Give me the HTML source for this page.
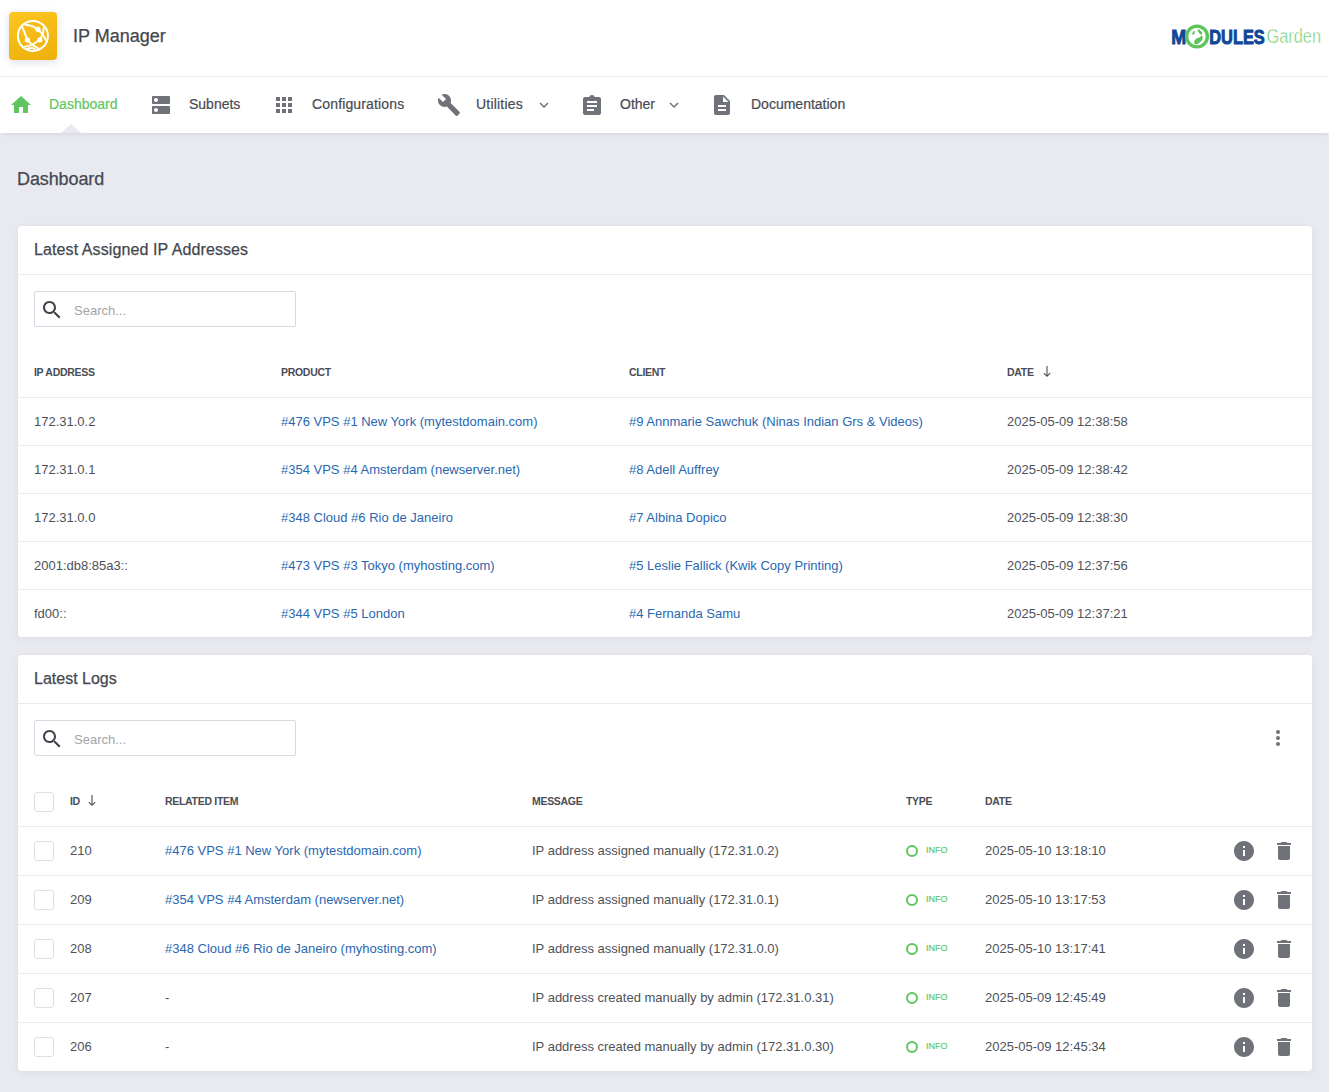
<!DOCTYPE html>
<html><head><meta charset="utf-8">
<style>
*{box-sizing:border-box;margin:0;padding:0}
html,body{width:1329px;height:1092px;overflow:hidden}
body{position:relative;background:#e9eaef;font-family:"Liberation Sans",sans-serif;color:#474a52}
.abs{position:absolute;white-space:nowrap;line-height:1}
#hdr{position:absolute;left:0;top:0;width:1329px;height:77px;background:#fff;border-bottom:1px solid #eceef2}
#nav{position:absolute;left:0;top:77px;width:1329px;height:56px;background:#fff;box-shadow:0 3px 4px -2px rgba(40,45,70,.12)}
.logo{position:absolute;left:9px;top:12px;width:48px;height:48px;border-radius:4px;background:linear-gradient(160deg,#fec623 0%,#f2b812 60%,#eeb00b 100%);box-shadow:0 2px 8px rgba(60,70,110,.18)}
.nt{font-size:14px;color:#474a52;-webkit-text-stroke:0.2px}
.ico{position:absolute;fill:#6f7279}
.card{position:absolute;left:18px;width:1294px;background:#fff;border-radius:3px;box-shadow:0 0 1px rgba(40,45,70,.10),0 2px 8px rgba(40,45,70,.06)}
.ct{font-size:16px;color:#44474f;-webkit-text-stroke:0.25px}
.hline{position:absolute;left:0;width:1294px;height:1px;background:#e8eaef}
.search{position:absolute;left:16px;width:262px;height:36px;border:1px solid #d6d9e1;border-radius:2px;background:#fff}
.ph{font-size:13px;color:#a2a5ab}
.th{font-size:10.5px;font-weight:bold;color:#4a4d55;letter-spacing:-0.3px}
.td{font-size:13px;color:#4e5158}
.lk{font-size:13px;color:#2a67b1}
.cb{position:absolute;width:20px;height:20px;border:1px solid #dcdfe6;border-radius:3px;background:#fff}
.ring{position:absolute;width:12px;height:12px;border:2px solid #5ec65f;border-radius:50%}
.info{font-size:9px;color:#5ec65f;letter-spacing:0px;-webkit-text-stroke:0.15px}
</style></head>
<body>
<div id="hdr">
  <div class="logo">
    <svg width="48" height="48" viewBox="0 0 48 48" style="position:absolute;left:0;top:0">
      <g transform="translate(23.9,23.9)" fill="none" stroke="#fff" stroke-width="1.9" stroke-linecap="round" stroke-linejoin="round">
        <circle cx="0" cy="0" r="15" stroke-width="2"/>
        <path d="M-7.5,-11.2 Q-0.5,-10.8 5.1,-6.4"/>
        <path d="M-10.3,-8.3 L-5.5,3.9"/>
        <path d="M5.1,-6.4 L9.8,-1.5 L7,3.9"/>
        <path d="M9.8,-1.5 L11,-8.5"/>
        <path d="M9.8,-1.5 L13.5,4.8"/>
        <path d="M-5.5,3.9 L-0.8,9 L7,3.9"/>
        <path d="M-8.5,11 L-0.8,9 L5.5,12.5"/>
        <path d="M-5,12.8 Q-1,10.8 2.5,13.6"/>
        <circle cx="5.1" cy="-6.4" r="1.7" fill="#fff"/>
        <circle cx="-5.5" cy="3.9" r="1.7" fill="#fff"/>
        <circle cx="7" cy="3.9" r="1.7" fill="#fff"/>
      </g>
    </svg>
  </div>
  <div class="abs" style="left:73px;top:26.8px;font-size:18px;color:#44474f;-webkit-text-stroke:0.25px">IP Manager</div>
  <svg width="160" height="30" viewBox="0 0 160 30" style="position:absolute;left:1166px;top:22px">
    <text x="5.2" y="21.5" font-family="Liberation Sans" font-weight="bold" font-size="19.5" fill="#0f4797" stroke="#0f4797" stroke-width="0.9" textLength="15" lengthAdjust="spacingAndGlyphs">M</text>
    <circle cx="31" cy="14.5" r="10.4" fill="#fff" stroke="#5cc45a" stroke-width="3.4"/>
    <path d="M25.5,12.5 l2.5,-4 l1,1.5 l-1,2.5z M31.5,7.2 l2.5,0.8 l2.5,3 l-1,2 l-2,-1.5 l-1.5,-2z M28,21.5 l0.5,-3 l2,-2 l3,-1 l2,-2 l1.3,1.5 l-0.5,3 l-2.5,2.5 l-3,2z" fill="#5cc45a"/>
    <text x="43.3" y="21.5" font-family="Liberation Sans" font-weight="bold" font-size="19.5" fill="#0f4797" stroke="#0f4797" stroke-width="0.9" textLength="55.5" lengthAdjust="spacingAndGlyphs">DULES</text>
    <text x="100.5" y="21.2" font-family="Liberation Sans" font-size="19.5" fill="#6fcc6c" stroke="#fff" stroke-width="0.45" textLength="54.5" lengthAdjust="spacingAndGlyphs">Garden</text>
  </svg>
</div>

<div id="nav">
  <svg class="ico" width="24" height="24" viewBox="0 0 24 24" style="left:9px;top:16px;fill:#5fc65f"><path d="M10 20v-6h4v6h5v-8h3L12 3 2 12h3v8z"/></svg>
  <div class="abs nt" style="left:49px;top:20.2px;color:#5fc65f">Dashboard</div>
  <svg class="ico" width="24" height="24" viewBox="0 0 24 24" style="left:149px;top:16px"><path d="M20 13H4c-.55 0-1 .45-1 1v6c0 .55.45 1 1 1h16c.55 0 1-.45 1-1v-6c0-.55-.45-1-1-1zM7 19c-1.1 0-2-.9-2-2s.9-2 2-2 2 .9 2 2-.9 2-2 2zM20 3H4c-.55 0-1 .45-1 1v6c0 .55.45 1 1 1h16c.55 0 1-.45 1-1V4c0-.55-.45-1-1-1zM7 9c-1.1 0-2-.9-2-2s.9-2 2-2 2 .9 2 2-.9 2-2 2z"/></svg>
  <div class="abs nt" style="left:189px;top:20.2px">Subnets</div>
  <svg class="ico" width="24" height="24" viewBox="0 0 24 24" style="left:272px;top:16px"><path d="M4 8h4V4H4v4zm6 12h4v-4h-4v4zm-6 0h4v-4H4v4zm0-6h4v-4H4v4zm6 0h4v-4h-4v4zm6-10v4h4V4h-4zm-6 4h4V4h-4v4zm6 6h4v-4h-4v4zm0 6h4v-4h-4v4z"/></svg>
  <div class="abs nt" style="left:312px;top:20.2px;letter-spacing:0.15px">Configurations</div>
  <svg class="ico" width="24" height="24" viewBox="0 0 24 24" style="left:436.5px;top:16px"><path d="M22.7 19l-9.1-9.1c.9-2.3.4-5-1.5-6.9-2-2-5-2.4-7.4-1.3L9 6 6 9 1.6 4.7C.4 7.1.9 10.1 2.9 12.1c1.9 1.9 4.6 2.4 6.9 1.5l9.1 9.1c.4.4 1 .4 1.4 0l2.3-2.3c.5-.4.5-1.1.1-1.4z"/></svg>
  <div class="abs nt" style="left:476px;top:20.2px;letter-spacing:0.2px">Utilities</div>
  <svg class="ico" width="18" height="18" viewBox="0 0 24 24" style="left:535px;top:19px"><path d="M16.59 8.59L12 13.17 7.41 8.59 6 10l6 6 6-6z"/></svg>
  <svg class="ico" width="24" height="24" viewBox="0 0 24 24" style="left:580px;top:17px"><path d="M19 3h-4.18C14.4 1.84 13.3 1 12 1c-1.3 0-2.4.84-2.82 2H5c-1.1 0-2 .9-2 2v14c0 1.1.9 2 2 2h14c1.1 0 2-.9 2-2V5c0-1.1-.9-2-2-2zm-2 14H7v-2h7v2zm3-4H7v-2h10v2zm0-4H7V7h10v2z"/></svg>
  <div class="abs nt" style="left:620px;top:20.2px">Other</div>
  <svg class="ico" width="18" height="18" viewBox="0 0 24 24" style="left:665px;top:19px"><path d="M16.59 8.59L12 13.17 7.41 8.59 6 10l6 6 6-6z"/></svg>
  <svg class="ico" width="24" height="24" viewBox="0 0 24 24" style="left:710px;top:16px"><path d="M14 2H6c-1.1 0-1.99.9-1.99 2L4 20c0 1.1.89 2 1.99 2H18c1.1 0 2-.9 2-2V8l-6-6zm2 16H8v-2h8v2zm0-4H8v-2h8v2zm-3-5V3.5L18.5 9H13z"/></svg>
  <div class="abs nt" style="left:751px;top:20.2px">Documentation</div>
  <svg width="20" height="9" viewBox="0 0 20 9" style="position:absolute;left:61px;top:47px"><path d="M0 9 L10 0 L20 9z" fill="#e9eaef"/></svg>
</div>

<div class="abs" style="left:17px;top:169.8px;font-size:18px;color:#44474f;letter-spacing:-0.1px;-webkit-text-stroke:0.25px">Dashboard</div>

<!-- CARD1 -->
<div class="card" style="top:226px;height:411px">
<div class="abs ct" style="left:16px;top:16.4px;letter-spacing:0.1px">Latest Assigned IP Addresses</div>
<div class="hline" style="top:48px"></div>
<div class="search" style="top:65px"><svg width="24" height="24" viewBox="0 0 24 24" style="position:absolute;left:5px;top:5.6px;fill:#3f4249"><path d="M15.5 14h-.79l-.28-.27C15.41 12.59 16 11.11 16 9.5 16 5.91 13.09 3 9.5 3S3 5.91 3 9.5 5.91 16 9.5 16c1.61 0 3.09-.59 4.23-1.57l.27.28v.79l5 4.99L20.49 19l-4.99-5zm-6 0C7.01 14 5 11.99 5 9.5S7.01 5 9.5 5 14 7.01 14 9.5 11.99 14 9.5 14z"/></svg><div class="abs ph" style="left:39px;top:12px">Search...</div></div>
<div class="abs th" style="left:16px;top:140.6px">IP ADDRESS</div>
<div class="abs th" style="left:263px;top:140.6px">PRODUCT</div>
<div class="abs th" style="left:611px;top:140.6px">CLIENT</div>
<div class="abs th" style="left:989px;top:140.6px">DATE</div>
<svg width="9" height="12" viewBox="0 0 9 12" style="position:absolute;left:1024.5px;top:140px"><path d="M4 0V10.3 M0.8 7.1 L4 10.3 L7.2 7.1" fill="none" stroke="#4a4d55" stroke-width="1.1"/></svg>
<div class="hline" style="top:171px"></div>
<div class="abs td" style="left:16px;top:188.9px">172.31.0.2</div>
<div class="abs lk" style="left:263px;top:188.9px">#476 VPS #1 New York (mytestdomain.com)</div>
<div class="abs lk" style="left:611px;top:188.9px">#9 Annmarie Sawchuk (Ninas Indian Grs &amp; Videos)</div>
<div class="abs td" style="left:989px;top:188.9px">2025-05-09 12:38:58</div>
<div class="hline" style="top:219px"></div>
<div class="abs td" style="left:16px;top:236.9px">172.31.0.1</div>
<div class="abs lk" style="left:263px;top:236.9px">#354 VPS #4 Amsterdam (newserver.net)</div>
<div class="abs lk" style="left:611px;top:236.9px">#8 Adell Auffrey</div>
<div class="abs td" style="left:989px;top:236.9px">2025-05-09 12:38:42</div>
<div class="hline" style="top:267px"></div>
<div class="abs td" style="left:16px;top:284.9px">172.31.0.0</div>
<div class="abs lk" style="left:263px;top:284.9px">#348 Cloud #6 Rio de Janeiro</div>
<div class="abs lk" style="left:611px;top:284.9px">#7 Albina Dopico</div>
<div class="abs td" style="left:989px;top:284.9px">2025-05-09 12:38:30</div>
<div class="hline" style="top:315px"></div>
<div class="abs td" style="left:16px;top:332.9px">2001:db8:85a3::</div>
<div class="abs lk" style="left:263px;top:332.9px">#473 VPS #3 Tokyo (myhosting.com)</div>
<div class="abs lk" style="left:611px;top:332.9px">#5 Leslie Fallick (Kwik Copy Printing)</div>
<div class="abs td" style="left:989px;top:332.9px">2025-05-09 12:37:56</div>
<div class="hline" style="top:363px"></div>
<div class="abs td" style="left:16px;top:380.9px">fd00::</div>
<div class="abs lk" style="left:263px;top:380.9px">#344 VPS #5 London</div>
<div class="abs lk" style="left:611px;top:380.9px">#4 Fernanda Samu</div>
<div class="abs td" style="left:989px;top:380.9px">2025-05-09 12:37:21</div>
</div>

<!-- CARD2 -->
<div class="card" style="top:655px;height:416px">
<div class="abs ct" style="left:16px;top:16.4px">Latest Logs</div>
<div class="hline" style="top:48px"></div>
<div class="search" style="top:65px"><svg width="24" height="24" viewBox="0 0 24 24" style="position:absolute;left:5px;top:5.6px;fill:#3f4249"><path d="M15.5 14h-.79l-.28-.27C15.41 12.59 16 11.11 16 9.5 16 5.91 13.09 3 9.5 3S3 5.91 3 9.5 5.91 16 9.5 16c1.61 0 3.09-.59 4.23-1.57l.27.28v.79l5 4.99L20.49 19l-4.99-5zm-6 0C7.01 14 5 11.99 5 9.5S7.01 5 9.5 5 14 7.01 14 9.5 11.99 14 9.5 14z"/></svg><div class="abs ph" style="left:39px;top:12px">Search...</div></div>
<svg width="8" height="20" viewBox="0 0 8 20" style="position:absolute;left:1256px;top:73px;fill:#6f7279"><circle cx="4" cy="4" r="2"/><circle cx="4" cy="10" r="2"/><circle cx="4" cy="16" r="2"/></svg>
<div class="cb" style="left:16px;top:137px"></div>
<div class="abs th" style="left:52px;top:140.7px">ID</div>
<div class="abs th" style="left:147px;top:140.7px">RELATED ITEM</div>
<div class="abs th" style="left:514px;top:140.7px">MESSAGE</div>
<div class="abs th" style="left:888px;top:140.7px">TYPE</div>
<div class="abs th" style="left:967px;top:140.7px">DATE</div>
<svg width="9" height="12" viewBox="0 0 9 12" style="position:absolute;left:70px;top:140.2px"><path d="M4 0V10.3 M0.8 7.1 L4 10.3 L7.2 7.1" fill="none" stroke="#4a4d55" stroke-width="1.1"/></svg>
<div class="hline" style="top:171px"></div>
<div class="cb" style="left:16px;top:186px"></div>
<div class="abs td" style="left:52px;top:189.4px">210</div>
<div class="abs lk" style="left:147px;top:189.4px">#476 VPS #1 New York (mytestdomain.com)</div>
<div class="abs td" style="left:514px;top:189.4px">IP address assigned manually (172.31.0.2)</div>
<div class="ring" style="left:888px;top:190px"></div>
<div class="abs info" style="left:908px;top:191.4px">INFO</div>
<div class="abs td" style="left:967px;top:189.4px">2025-05-10 13:18:10</div>
<svg class="ico" width="24" height="24" viewBox="0 0 24 24" style="left:1214px;top:184px"><path d="M12 2C6.48 2 2 6.48 2 12s4.48 10 10 10 10-4.48 10-10S17.52 2 12 2zm1 15h-2v-6h2v6zm0-8h-2V7h2v2z"/></svg>
<svg class="ico" width="24" height="24" viewBox="0 0 24 24" style="left:1254px;top:184px"><path d="M6 19c0 1.1.9 2 2 2h8c1.1 0 2-.9 2-2V7H6v12zM19 4h-3.5l-1-1h-5l-1 1H5v2h14V4z"/></svg>
<div class="hline" style="top:220px"></div>
<div class="cb" style="left:16px;top:235px"></div>
<div class="abs td" style="left:52px;top:238.4px">209</div>
<div class="abs lk" style="left:147px;top:238.4px">#354 VPS #4 Amsterdam (newserver.net)</div>
<div class="abs td" style="left:514px;top:238.4px">IP address assigned manually (172.31.0.1)</div>
<div class="ring" style="left:888px;top:239px"></div>
<div class="abs info" style="left:908px;top:240.4px">INFO</div>
<div class="abs td" style="left:967px;top:238.4px">2025-05-10 13:17:53</div>
<svg class="ico" width="24" height="24" viewBox="0 0 24 24" style="left:1214px;top:233px"><path d="M12 2C6.48 2 2 6.48 2 12s4.48 10 10 10 10-4.48 10-10S17.52 2 12 2zm1 15h-2v-6h2v6zm0-8h-2V7h2v2z"/></svg>
<svg class="ico" width="24" height="24" viewBox="0 0 24 24" style="left:1254px;top:233px"><path d="M6 19c0 1.1.9 2 2 2h8c1.1 0 2-.9 2-2V7H6v12zM19 4h-3.5l-1-1h-5l-1 1H5v2h14V4z"/></svg>
<div class="hline" style="top:269px"></div>
<div class="cb" style="left:16px;top:284px"></div>
<div class="abs td" style="left:52px;top:287.4px">208</div>
<div class="abs lk" style="left:147px;top:287.4px">#348 Cloud #6 Rio de Janeiro (myhosting.com)</div>
<div class="abs td" style="left:514px;top:287.4px">IP address assigned manually (172.31.0.0)</div>
<div class="ring" style="left:888px;top:288px"></div>
<div class="abs info" style="left:908px;top:289.4px">INFO</div>
<div class="abs td" style="left:967px;top:287.4px">2025-05-10 13:17:41</div>
<svg class="ico" width="24" height="24" viewBox="0 0 24 24" style="left:1214px;top:282px"><path d="M12 2C6.48 2 2 6.48 2 12s4.48 10 10 10 10-4.48 10-10S17.52 2 12 2zm1 15h-2v-6h2v6zm0-8h-2V7h2v2z"/></svg>
<svg class="ico" width="24" height="24" viewBox="0 0 24 24" style="left:1254px;top:282px"><path d="M6 19c0 1.1.9 2 2 2h8c1.1 0 2-.9 2-2V7H6v12zM19 4h-3.5l-1-1h-5l-1 1H5v2h14V4z"/></svg>
<div class="hline" style="top:318px"></div>
<div class="cb" style="left:16px;top:333px"></div>
<div class="abs td" style="left:52px;top:336.4px">207</div>
<div class="abs td" style="left:147px;top:336.4px">-</div>
<div class="abs td" style="left:514px;top:336.4px">IP address created manually by admin (172.31.0.31)</div>
<div class="ring" style="left:888px;top:337px"></div>
<div class="abs info" style="left:908px;top:338.4px">INFO</div>
<div class="abs td" style="left:967px;top:336.4px">2025-05-09 12:45:49</div>
<svg class="ico" width="24" height="24" viewBox="0 0 24 24" style="left:1214px;top:331px"><path d="M12 2C6.48 2 2 6.48 2 12s4.48 10 10 10 10-4.48 10-10S17.52 2 12 2zm1 15h-2v-6h2v6zm0-8h-2V7h2v2z"/></svg>
<svg class="ico" width="24" height="24" viewBox="0 0 24 24" style="left:1254px;top:331px"><path d="M6 19c0 1.1.9 2 2 2h8c1.1 0 2-.9 2-2V7H6v12zM19 4h-3.5l-1-1h-5l-1 1H5v2h14V4z"/></svg>
<div class="hline" style="top:367px"></div>
<div class="cb" style="left:16px;top:382px"></div>
<div class="abs td" style="left:52px;top:385.4px">206</div>
<div class="abs td" style="left:147px;top:385.4px">-</div>
<div class="abs td" style="left:514px;top:385.4px">IP address created manually by admin (172.31.0.30)</div>
<div class="ring" style="left:888px;top:386px"></div>
<div class="abs info" style="left:908px;top:387.4px">INFO</div>
<div class="abs td" style="left:967px;top:385.4px">2025-05-09 12:45:34</div>
<svg class="ico" width="24" height="24" viewBox="0 0 24 24" style="left:1214px;top:380px"><path d="M12 2C6.48 2 2 6.48 2 12s4.48 10 10 10 10-4.48 10-10S17.52 2 12 2zm1 15h-2v-6h2v6zm0-8h-2V7h2v2z"/></svg>
<svg class="ico" width="24" height="24" viewBox="0 0 24 24" style="left:1254px;top:380px"><path d="M6 19c0 1.1.9 2 2 2h8c1.1 0 2-.9 2-2V7H6v12zM19 4h-3.5l-1-1h-5l-1 1H5v2h14V4z"/></svg>
</div>

</body></html>
